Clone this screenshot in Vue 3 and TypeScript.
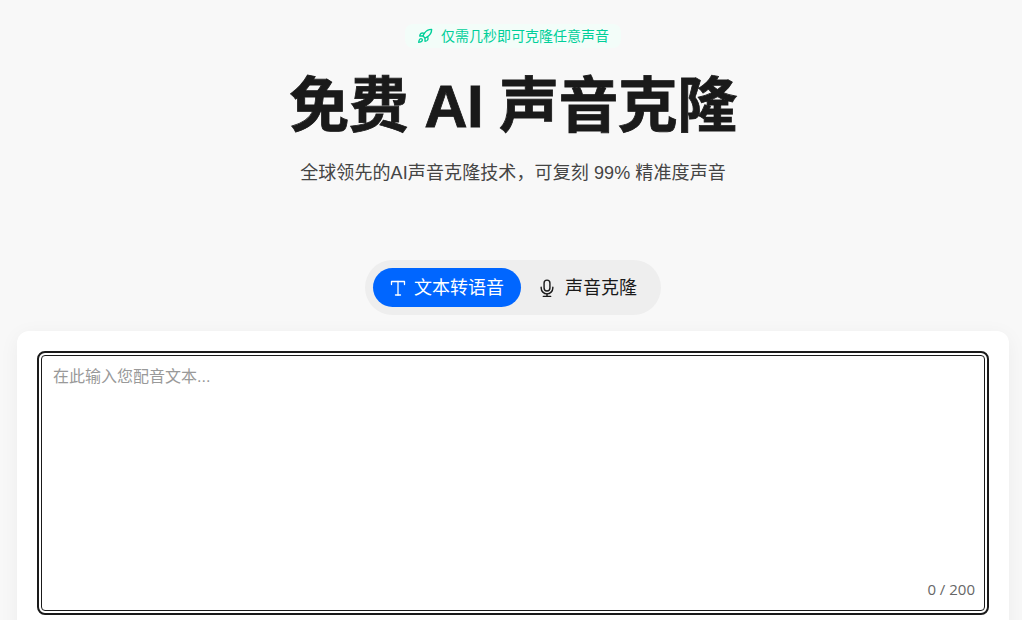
<script setup lang="ts">
import { ref, computed } from 'vue'
const text = ref('')
const count = computed(() => `${text.value.length} / 200`)
</script>

<template>
  <div class="page">
    <header class="hero">
      <div class="badge">
        <svg class="rocket" viewBox="0 0 24 24" fill="none" stroke="currentColor" stroke-width="2" stroke-linecap="round" stroke-linejoin="round">
          <path d="M4.5 16.5c-1.5 1.26-2 5-2 5s3.74-.5 5-2c.71-.84.7-2.13-.09-2.91a2.18 2.18 0 0 0-2.91-.09z" />
          <path d="m12 15-3-3a22 22 0 0 1 2-3.95A12.88 12.88 0 0 1 22 2c0 2.72-.78 7.5-6 11a22.35 22.35 0 0 1-4 2z" />
          <path d="M9 12H4s.55-3.03 2-4c1.62-1.08 5 0 5 0" />
          <path d="M12 15v5s3.03-.55 4-2c1.08-1.62 0-5 0-5" />
        </svg>
        <span class="badge-text">仅需几秒即可克隆任意声音</span>
      </div>
      <h1 class="title">免费 AI 声音克隆</h1>
      <p class="subtitle">全球领先的AI声音克隆技术，可复刻 99% 精准度声音</p>
    </header>

    <div class="tabs-wrap">
      <div class="tabs">
        <button class="tab active" type="button">
          <svg class="tab-icon" viewBox="0 0 18 18" fill="none" stroke="currentColor" stroke-width="1.3" stroke-linecap="round" stroke-linejoin="round">
            <path d="M2.500 5.500V2.500h13v3" />
            <path d="M9 2.500v13.500" />
            <path d="M6.500 16h5" />
          </svg>
          <span class="tab-label">文本转语音</span>
        </button>
        <button class="tab second" type="button">
          <svg class="tab-icon mic" viewBox="0 0 24 24" fill="none" stroke="currentColor" stroke-width="1.7" stroke-linecap="round" stroke-linejoin="round">
            <rect x="8.500" y="2.500" width="7" height="13" rx="3.500" />
            <path d="M19 11v1a7 7 0 0 1-14 0v-1" />
            <path d="M12 19v3" />
            <path d="M7.500 22h9" />
          </svg>
          <span class="tab-label">声音克隆</span>
        </button>
      </div>
    </div>

    <section class="card">
      <div class="field">
        <textarea v-model="text" class="input" maxlength="200" placeholder="在此输入您配音文本..."></textarea>
        <span class="counter">{{ count }}</span>
      </div>
    </section>
  </div>
</template>

<style>
html, body { margin: 0; background: #f8f8f8; overflow: hidden; }
</style>

<style scoped>
.page {
  height: 620px;
  overflow: hidden;
  background: #f8f8f8;
  font-family: "Liberation Sans", "Noto Sans CJK SC", sans-serif;
  color: #1a1a1a;
  box-sizing: border-box;
  padding: 24px 13px 0 17px;
}
.hero { display: flex; flex-direction: column; align-items: center; }
.badge {
  display: flex;
  align-items: center;
  gap: 8px;
  height: 24px;
  padding: 0 12px;
  border-radius: 8px;
  background: #f3fdf9;
  color: #00cf9a;
  font-size: 14px;
}
.badge-text { position: relative; top: -1px; }
.rocket { width: 16px; height: 16px; }
.title {
  margin: 23px 0 0;
  font-size: 60px;
  line-height: 72px;
  font-weight: 700;
  -webkit-text-stroke: 0.8px #1a1a1a;
  letter-spacing: -0.6px;
  color: #1a1a1a;
}
.subtitle {
  margin: 16px 0 0;
  font-size: 18px;
  line-height: 28px;
  letter-spacing: 0.1px;
  color: #444;
}
.tabs-wrap { display: flex; justify-content: center; margin-top: 73px; }
.tabs {
  display: flex;
  padding: 8px;
  border-radius: 28px;
  background: #eeeeee;
}
.tab {
  display: flex;
  align-items: center;
  gap: 7px;
  height: 39px;
  padding: 0 17px 0 16px;
  border: 0;
  border-radius: 20px;
  background: transparent;
  color: #1a1a1a;
  font: inherit;
  font-size: 18px;
}
.tab.second { gap: 8px; padding: 0 16px; }
.tab-label { position: relative; top: -2px; }
.tab.active { background: #0066ff; color: #fff; }
.tab-icon { width: 18px; height: 18px; }
.tab-icon.mic { width: 20px; height: 20px; }
.card {
  margin-top: 16px;
  padding: 20px;
  height: 400px;
  background: #fff;
  border-radius: 12px;
  box-shadow: 0 4px 20px rgba(0, 0, 0, 0.05);
}
.field { position: relative; height: 264px; }
.input {
  display: block;
  width: 100%;
  height: 100%;
  box-sizing: border-box;
  padding: 13px 14px;
  margin: 0;
  border: 2px solid #1a1a1a;
  border-radius: 8px;
  outline: 1px solid #1a1a1a;
  outline-offset: -5px;
  resize: none;
  background: #fff;
  font: inherit;
  font-size: 16px;
  line-height: 22px;
  color: #1a1a1a;
}
.input::placeholder { color: #999; opacity: 1; }
.counter {
  position: absolute;
  right: 14px;
  bottom: 17px;
  font-family: "Open Sans", sans-serif;
  font-size: 15px;
  line-height: 18px;
  color: #666;
}
</style>
